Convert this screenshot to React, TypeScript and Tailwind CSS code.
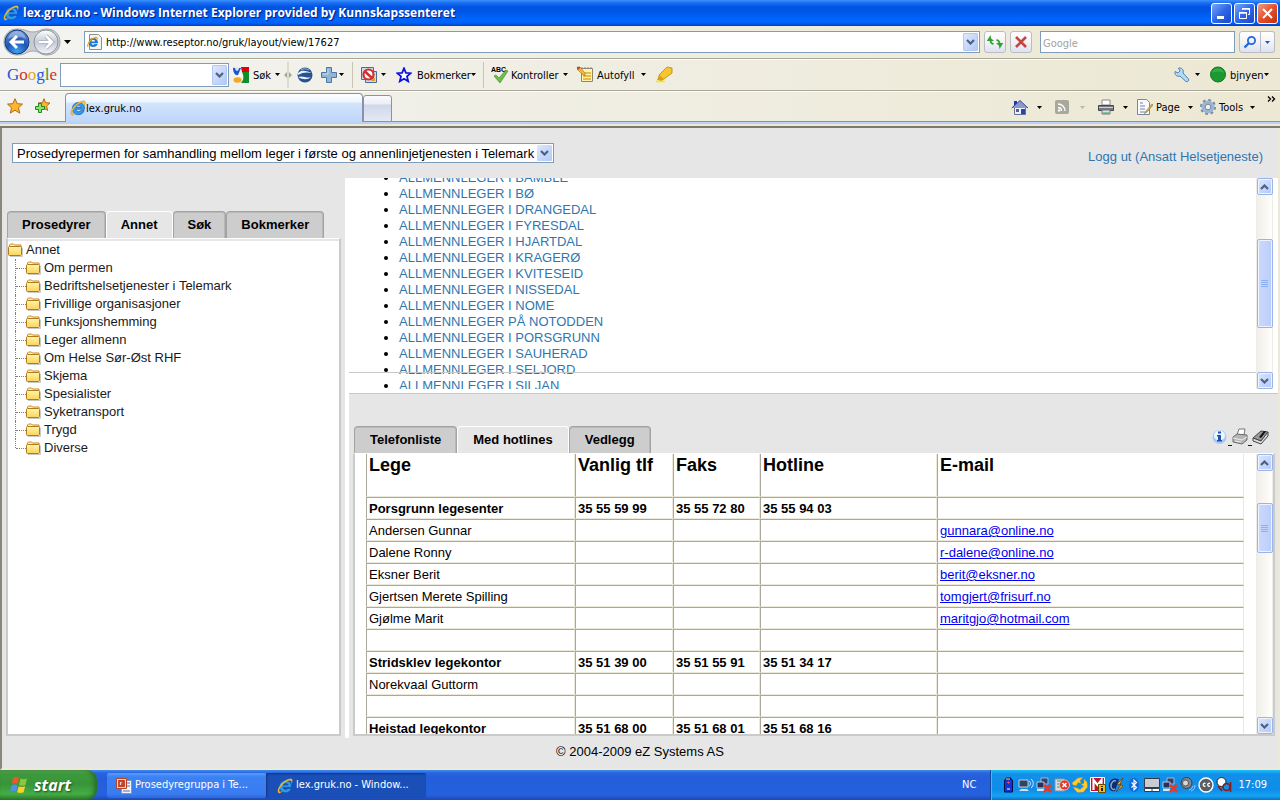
import React from "react";

const ui = "font-['DejaVu_Sans_Condensed','DejaVu_Sans',Tahoma,sans-serif]";

function IeIcon({ size = 16 }: { size?: number }) {
  return (
    <svg width={size} height={size} viewBox="0 0 16 16" className="shrink-0" aria-hidden="true">
      <path d="M14.600 9.300H6c.2 1.500 1.200 2.300 2.600 2.300 1 0 1.800-.4 2.300-1.100h3.300c-.7 2.500-2.900 4.200-5.700 4.200-3.600 0-6.100-2.500-6.100-6.100s2.500-6.200 6.100-6.200c3.700 0 6.300 2.600 6.100 6.900zM6.100 7.100h5c-.2-1.200-1.100-1.900-2.500-1.900S6.300 5.900 6.100 7.100z" fill="#2f9bef" stroke="#0f4f9e" strokeWidth=".6" />
      <path d="M1.600 15C-.7 12.500 2.400 7.200 6.600 3.900 9.900 1.300 13.700 0 15 1.300c.8.9.3 2.700-.6 4.300.2-1.500.1-2.700-.8-3C11.500 2 8.600 3.700 6 6.200 3.100 9 1.600 12.400 2.500 13.500c.5.600 1.800.4 3.200-.5-1.500 1.600-3.300 2.800-4.100 2z" fill="#f9c440" stroke="#b97a10" strokeWidth=".3" />
    </svg>
  );
}

function Caret({ className = "text-black" }: { className?: string }) {
  return (
    <svg width="5" height="3" viewBox="0 0 5 3" className={"shrink-0 " + className} aria-hidden="true">
      <path d="M0 0h5L2.500 3z" fill="currentColor" />
    </svg>
  );
}

function Chevron({ up = false }: { up?: boolean }) {
  return (
    <svg width="9" height="6" viewBox="0 0 9 6" aria-hidden="true">
      <path d={up ? "M1 5l3.500-3.500L8 5" : "M1 1l3.500 3.500L8 1"} fill="none" stroke="#4d6185" strokeWidth="2.200" />
    </svg>
  );
}

function DropButton({ label }: { label: string }) {
  return (
    <button type="button" aria-label={label} className="flex w-[15px] shrink-0 items-center justify-center self-stretch rounded-[1px] border border-[#b4c8f6] bg-linear-to-br from-[#dfe8fd] to-[#b2c9f7]">
      <Chevron />
    </button>
  );
}

function TitleBar() {
  const btn = "flex size-[21px] items-center justify-center rounded-[3px] border border-white";
  return (
    <header className="flex h-[26px] shrink-0 items-center bg-[linear-gradient(#3c92ff_0,#1a6cf0_3px,#0054e3_7px,#0055e5_11px,#0066ff_20px,#0062f8_23px,#003fc0_26px)] pr-0.5 pl-[3px]">
      <IeIcon />
      <h1 className="ml-1 grow font-['Open_Sans','Trebuchet_MS',sans-serif] text-[12px] leading-5 font-bold whitespace-nowrap text-white [text-shadow:1px_1px_1px_#0a1883]">
        lex.gruk.no - Windows Internet Explorer provided by Kunnskapssenteret
      </h1>
      <div className="flex gap-0.5">
        <button type="button" aria-label="Minimize" className={btn + " bg-linear-to-br from-[#7ba4f4] via-[#2f66e8] to-[#1c46c8]"}>
          <svg width="15" height="15" aria-hidden="true"><path d="M3 10h7v3H3z" fill="#fff" /></svg>
        </button>
        <button type="button" aria-label="Restore" className={btn + " bg-linear-to-br from-[#7ba4f4] via-[#2f66e8] to-[#1c46c8]"}>
          <svg width="15" height="15" fill="none" stroke="#fff" aria-hidden="true"><path d="M5.500 4V2.500h7v6H11M2.500 6.500h7v6h-7z" /><path d="M5 3h8M2 7h8" strokeWidth="1.500" /></svg>
        </button>
        <button type="button" aria-label="Close" className={btn + " bg-linear-to-br from-[#f09a82] via-[#e2502a] to-[#c03208]"}>
          <svg width="15" height="15" aria-hidden="true"><path d="M3 3l9 9M12 3l-9 9" stroke="#fff" strokeWidth="2" /></svg>
        </button>
      </div>
    </header>
  );
}

function NavButtons() {
  return (
    <svg width="58" height="28" viewBox="0 0 58 28" className="shrink-0" aria-hidden="true">
      <defs>
        <radialGradient id="back" cx=".5" cy=".9" r=".9"><stop offset="0" stopColor="#3da0f0" /><stop offset=".5" stopColor="#1c56b4" /><stop offset="1" stopColor="#6d94d2" /></radialGradient>
        <linearGradient id="fwd" x2="0" y2="1"><stop offset="0" stopColor="#fff" /><stop offset=".5" stopColor="#c3cbd6" /><stop offset="1" stopColor="#f2f5f9" /></linearGradient>
      </defs>
      <path d="M14 1C23 1 24 4 30 4s7-3 14-3c8 0 13 6 13 13s-5 13-13 13c-7 0-8-4-14-4s-7 4-16 4C6 27 1 21 1 14S6 1 14 1z" fill="#c9ccd1" stroke="#a3a6ac" />
      <circle cx="14" cy="14" r="12" fill="url(#back)" stroke="#173c7c" />
      <path d="M5 11c1-5 5-8 9-8s8 3 9 8c-5-3-13-3-18 0z" fill="#fff" opacity=".35" />
      <path d="M14 8l-6 6 6 6M8.500 14H21" fill="none" stroke="#fff" strokeWidth="3" />
      <circle cx="43" cy="14" r="12" fill="url(#fwd)" stroke="#8d939d" />
      <path d="M43 8l6 6-6 6M48.500 14H36" fill="none" stroke="#9aa1ac" strokeWidth="4" />
      <path d="M43 8l6 6-6 6M48.500 14H36" fill="none" stroke="#fff" strokeWidth="2.600" />
    </svg>
  );
}

function AddressBar() {
  const btn = "flex h-[22px] items-center justify-center border border-[#b9bcc8] bg-linear-to-b from-white via-[#f3f3f5] to-[#dde2f0]";
  return (
    <div className="flex h-8 shrink-0 items-center bg-linear-to-r from-[#f3f3f1] to-[#ece8d3] pr-[5px] pl-[3px]">
      <NavButtons />
      <svg width="7" height="4" className="mr-[13px] ml-[3px] shrink-0" aria-hidden="true"><path d="M0 0h7L3.500 4z" /></svg>
      <div className="flex h-[22px] min-w-0 grow items-center border border-[#7f9db9] bg-white p-px">
        <svg width="15" height="16" viewBox="0 0 15 16" className="ml-px shrink-0" aria-hidden="true">
          <path d="M2.500.5h9l3 3v12h-12z" fill="#f4f4ee" stroke="#8f8f88" />
          <path d="M11 9.200H4.400c.2 1.100.9 1.500 1.800 1.500.7 0 1.200-.3 1.500-.7h2.900c-.5 1.800-2.200 3-4.400 3-2.700 0-4.500-1.800-4.500-4.500S3.500 4 6.200 4c2.900 0 4.800 2 4.800 5.200zM4.400 7.500h3.700c-.1-1-.8-1.400-1.900-1.400s-1.600.4-1.800 1.400z" fill="#1d77d2" />
          <path d="M1 13C-.3 11 3 5 8 3.500c2-.5 2.600.8 2 2" fill="none" stroke="#f0a51c" strokeWidth="1.200" />
        </svg>
        <input aria-label="Address" defaultValue="http://www.reseptor.no/gruk/layout/view/17627" className="ml-1 min-w-0 grow pt-0.5 text-[11px] leading-4 outline-none" />
        <DropButton label="Show addresses" />
      </div>
      <button type="button" aria-label="Refresh" className={btn + " ml-1 w-[22px] rounded-[3px]"}>
        <svg width="18" height="16" aria-hidden="true"><path d="M1 6l4-5v3h3M5 4M17 10l-4 5v-3h-3" fill="none" /><path d="M1 6.500L4.500 1v0L5 4.200 8 7H1zM17 9.500L13.500 15l-.5-3.200L10 9h7z" fill="#32a032" /><path d="M4.500 5.500c0 3 .5 4 3 4.500M13.500 10.500c0-3-.5-4-3-4.500" fill="none" stroke="#32a032" strokeWidth="2" /></svg>
      </button>
      <button type="button" aria-label="Stop" className={btn + " ml-1 w-[22px] rounded-[3px]"}>
        <svg width="14" height="14" aria-hidden="true"><path d="M2 2l10 10M12 2L2 12" stroke="#c5443f" strokeWidth="2.600" /></svg>
      </button>
      <input aria-label="Search" placeholder="Google" className="ml-2 h-[22px] w-[195px] border border-[#7f9db9] bg-white px-0.5 pt-0.5 text-[11px] outline-none placeholder:text-[#a3a3a0]" />
      <button type="button" aria-label="Search the web" className={btn + " ml-1 w-[22px] rounded-l-[3px]"}>
        <svg width="14" height="14" aria-hidden="true"><circle cx="8.500" cy="5.500" r="3.600" fill="#eaf4ff" stroke="#2467df" strokeWidth="1.800" /><path d="M6 8l-4.500 4.500" stroke="#2467df" strokeWidth="2.400" /></svg>
      </button>
      <button type="button" aria-label="Search options" className={btn + " w-3.5 rounded-r-[3px] border-l-0"}>
        <Caret className="text-[#1658d8]" />
      </button>
    </div>
  );
}

function GoogleBar() {
  const sep = "h-[26px] w-px shrink-0 bg-[#c9c5b2]";
  const item = "flex shrink-0 items-center whitespace-nowrap";
  return (
    <div className="flex h-8 shrink-0 items-center border-t border-[#aca899] bg-linear-to-r from-[#f3f3f1] to-[#ece8d3] pr-[11px] pl-[7px] text-[11px] leading-4 shadow-[inset_0_1px_#fff]">
      <span className="w-[53px] shrink-0 font-['Liberation_Serif',serif] text-[17px] leading-5 whitespace-nowrap">
        <b className="font-normal text-[#1f56d8]">G</b><b className="font-normal text-[#d4302a]">o</b><b className="font-normal text-[#e2a81c]">o</b><b className="font-normal text-[#1f56d8]">g</b><b className="font-normal text-[#2a9c38]">l</b><b className="font-normal text-[#d4302a]">e</b>
      </span>
      <div className="flex h-6 w-[169px] shrink-0 border border-[#7f9db9] bg-white p-px">
        <input aria-label="Google search" className="min-w-0 grow outline-none" />
        <DropButton label="Search history" />
      </div>
      <button type="button" className={item + " ml-1 w-[50px]"}>
        <svg width="16" height="16" className="mr-1 shrink-0" aria-hidden="true">
          <path d="M8 0h8v5H9z" fill="#e0000c" /><path d="M9 5h7v11H8c3-3 3-7 1-11z" fill="#0f8f2c" />
          <path d="M0 1c2-1 3 1 4 3l2-3h2L5 8C2 9 0 5 0 1z" fill="#1f55c8" /><circle cx="4" cy="2" r="1.800" fill="#cfe0fa" /><path d="M4.500 9L8 6.500 9.500 9z" fill="#fff" /><ellipse cx="4.500" cy="13" rx="4" ry="2.800" fill="#f3a927" />
        </svg>
        <span className="w-[22px] pt-0.5 text-left">Søk</span><Caret />
      </button>
      <svg width="8" height="26" className="ml-px shrink-0" aria-hidden="true"><path d="M0 13l3-3v6zM8 13l-3-3v6z" fill="#aaa793" /><path d="M4 0v26" stroke="#c9c5b2" /></svg>
      <svg width="16" height="16" className="ml-[5px] shrink-0" aria-hidden="true"><circle cx="8" cy="8" r="7.500" fill="#27518f" /><path d="M1 6c4-4 9-2 14 0-5-1-9-1-14 2zM1 10c5-2 9 2 13 0-3 3-8 3-13 0z" fill="#e8f1fa" /><path d="M4 3c3-2 6-1 8 0" stroke="#9fc0e6" fill="none" /></svg>
      <svg width="16" height="16" className="ml-2 shrink-0" aria-hidden="true"><path d="M5.500.5h5v5h5v5h-5v5h-5v-5h-5v-5h5z" fill="#8fb6d8" stroke="#50789f" /><path d="M7 2v5H2" stroke="#c4dcf0" fill="none" /></svg>
      <span className="w-0.5" /><Caret /><span className="w-2" />
      <span className={sep} />
      <svg width="16" height="16" className="ml-2 shrink-0" aria-hidden="true"><path d="M.5.5h12v12H.5zM11 4.500h4.500v11h-11V13" fill="#c7dcf2" stroke="#4a6d99" /><path d="M10 11h4v3h-4z" fill="#e0a02c" /><circle cx="7.500" cy="7.500" r="5" fill="#fff" stroke="#d42e2a" strokeWidth="2.200" /><path d="M4 4.500l7 6.500" stroke="#d42e2a" strokeWidth="2.400" /></svg>
      <span className="w-1" /><Caret />
      <button type="button" className={item + " ml-2.5"}>
        <svg width="16" height="16" className="mr-[5px] shrink-0" aria-hidden="true"><path d="M8 1.300l1.900 4.500 4.800.4-3.700 3.200 1.200 4.900L8 11.700l-4.200 2.600 1.200-4.900L1.300 6.200l4.800-.4z" fill="#fff" stroke="#0a12e0" strokeWidth="1.800" /></svg>
        <span className="w-[54px] pt-0.5 text-left">Bokmerker</span><Caret />
      </button>
      <span className={sep + " ml-[7px]"} />
      <button type="button" className={item + " ml-2"}>
        <svg width="16" height="17" className="mr-[3px] shrink-0 overflow-visible" aria-hidden="true"><text x="-1" y="6" fontSize="7" fontFamily="Liberation Sans" fontWeight="bold">ABC</text><path d="M2 10l2-1 3 3 7-8 2 1-8 12z" fill="#6cc04a" stroke="#3b7d2a" strokeWidth=".6" /></svg>
        <span className="w-[52px] pt-0.5 text-left">Kontroller</span><Caret />
      </button>
      <button type="button" className={item + " ml-[9px]"}>
        <svg width="17" height="17" className="mr-[3px] shrink-0" aria-hidden="true"><path d="M4.500 2.500h11v13h-11z" fill="#fff5b0" stroke="#8c8870" /><path d="M5 1v2M8 1v2M11 1v2M14 1v2" stroke="#888" /><path d="M8 7h6M6 10h8M6 13h8" stroke="#e0a820" strokeWidth="1.500" /><path d="M0 1h3l5 6v3L5 8 0 3z" fill="#f5b33a" stroke="#9b6a1c" strokeWidth=".6" /><path d="M0 1h3v1L1 4 0 3z" fill="#d23a2c" /></svg>
        <span className="w-[44px] pt-0.5 text-left">Autofyll</span><Caret />
      </button>
      <svg width="17" height="17" className="ml-2.5 shrink-0" aria-hidden="true"><path d="M3 9l8-8 5 1v5l-8 6-4 1z" fill="#f6c62c" stroke="#b8860b" strokeWidth=".8" /><path d="M3 9l5 4-2 2-5-1z" fill="#d9a216" /><path d="M0 15.500h9" stroke="#ffe600" strokeWidth="1.500" /></svg>
      <span className="grow" />
      <svg width="16" height="16" className="shrink-0" aria-hidden="true"><path d="M1 4.500L4 6l2-2-1.500-3C8 .5 10 3 9 6l5.500 6c1 1.500-1 3.500-2.500 2.500L6 9C3 10 .5 8 1 4.500z" fill="#b9daf3" stroke="#4e84b4" /></svg>
      <span className="w-[5px]" /><Caret />
      <button type="button" className={item + " ml-2.5"}>
        <svg width="17" height="17" className="mr-[3px] shrink-0" aria-hidden="true"><circle cx="8" cy="8.500" r="7.500" fill="#1b9a2f" stroke="#0f7522" /><path d="M2 7c1-6 11-6 12 0-3-2-9-2-12 0z" fill="#4dbb57" opacity=".6" /></svg>
        <span className="w-[34px] pt-0.5 text-left">bjnyen</span><Caret />
      </button>
    </div>
  );
}

function TabBar() {
  const item = "flex items-center whitespace-nowrap";
  return (
    <div className="flex h-8 shrink-0 items-end border-t border-[#aca899] bg-linear-to-r from-[#f3f3f1] to-[#ece8d3] pr-1 pl-[7px] text-[11px] leading-4 shadow-[inset_0_1px_#fff,inset_0_-1px_#8d90a8]">
      <svg width="16" height="16" className="mb-2 shrink-0" aria-hidden="true"><path d="M8 .7l2.200 5 5.300.4-4 3.600 1.200 5.400L8 12.200l-4.700 2.900 1.200-5.400-4-3.600 5.300-.4z" fill="#ffb62c" stroke="#b06a12" /></svg>
      <svg width="17" height="16" className="mr-3.5 mb-2 ml-[11px] shrink-0" aria-hidden="true"><path d="M10 .7l1.600 4 4.400.3-3.400 3 1 4.500L10 10l-4 2.500 1-4.500-3-3 4.500-.3z" fill="#ffb62c" stroke="#b06a12" /><path d="M4.500 5.500h3v3h3v3h-3v3h-3v-3h-3v-3h3z" fill="#8fe070" stroke="#1f8a1f" /></svg>
      <div className="flex h-[29px] w-[298px] items-center rounded-t-[4px] border border-b-0 border-[#8d90a8] bg-[linear-gradient(#fdfeff_0,#eef5fe_8px,#d3e5fc_9px,#bdd5fa_29px)] pl-1">
        <IeIcon />
        <span className="pt-0.5">lex.gruk.no</span>
      </div>
      <button type="button" aria-label="New tab" className="h-[27px] w-[29px] rounded-t-[3px] border border-[#8d90a8] bg-[linear-gradient(#fbfbfd_0,#eceef5_8px,#cfd7ea_9px,#e6eaf5_26px)]" />
      <span className="grow" />
      <div className="mb-1.5 flex items-center">
        <svg width="18" height="17" aria-hidden="true"><path d="M3 2h3v5H3z" fill="#2338a8" /><path d="M3.500 8.500h11v7h-11z" fill="#eef1fa" stroke="#66719c" /><path d="M.7 9L9 1.500 17 9" fill="#8b98cf" stroke="#3c4a86" /><path d="M10 10h4v5h-4z" fill="#1f4aa8" /><path d="M5 10h3v3H5z" fill="#58617c" /></svg>
        <span className="w-2" /><Caret /><span className="w-[13px]" />
        <svg width="15" height="15" aria-hidden="true"><rect width="14" height="14" rx="2" fill="#aaa79b" /><path d="M3 4c4 0 7 3 7 7M3 7.500c2 0 3.500 1.500 3.500 3.500" stroke="#fff" strokeWidth="1.400" fill="none" /><circle cx="4" cy="10.500" r="1.200" fill="#fff" /></svg>
        <span className="w-[10px]" /><Caret className="text-[#bcb9ac]" /><span className="w-[13px]" />
        <svg width="16" height="16" aria-hidden="true"><path d="M4 1h8v5H4z" fill="#fff" stroke="#888" /><path d="M.5 6.500h15v5H.5z" fill="#77797d" stroke="#45484c" /><path d="M1 8.500h14" stroke="#cfd2d6" /><path d="M4 11h8v4H4z" fill="#cfe6f2" stroke="#777" /><path d="M5 14h6" stroke="#3f9c58" /></svg>
        <span className="w-[9px]" /><Caret /><span className="w-[9px]" />
        <button type="button" className={item}>
          <svg width="16" height="16" className="mr-[3px]" aria-hidden="true"><path d="M.5.500h9l3 3v12H.5z" fill="#f8fafc" stroke="#7d8794" /><path d="M3 4h3M3 7h5M3 10h5M3 13h5" stroke="#6a87ae" /><path d="M15 5l-6 7-1.500 2.500L10 13l6-7z" fill="#e9b44a" stroke="#8a6a24" strokeWidth=".6" /></svg>
          <span className="w-8 pt-0.5 text-left">Page</span><Caret />
        </button>
        <button type="button" className={item + " ml-[6px]"}>
          <svg width="18" height="18" className="mr-0.5" aria-hidden="true"><circle cx="9" cy="9" r="7" fill="none" stroke="#6d87a6" strokeWidth="2" strokeDasharray="2.750 2.750" /><circle cx="9" cy="9" r="4.800" fill="none" stroke="#9bb4d0" strokeWidth="3.400" /><circle cx="9" cy="9" r="2.800" fill="#f3f2ea" stroke="#6d87a6" /></svg>
          <span className="w-[31px] pt-0.5 text-left">Tools</span><Caret />
        </button>
      </div>
      <button type="button" aria-label="More" className="mb-5 ml-3">
        <svg width="9" height="6" aria-hidden="true"><path d="M1 .5L3.500 3 1 5.500M5 .5L7.500 3 5 5.500" fill="none" stroke="#000" strokeWidth="1.300" /></svg>
      </button>
    </div>
  );
}

function ScrollButton({ up = false }: { up?: boolean }) {
  return (
    <button type="button" aria-label={up ? "Scroll up" : "Scroll down"} className="flex h-[17px] w-4 shrink-0 items-center justify-center rounded-[2px] border border-[#98b4ea] bg-linear-to-br from-[#dce6fd] to-[#b4c9f8] shadow-[inset_0_0_0_1px_#eef3ff]">
      <Chevron up={up} />
    </button>
  );
}

function ScrollBar({ spacer, thumb }: { spacer: string; thumb: string }) {
  return (
    <div className="flex w-[17px] shrink-0 flex-col items-center border-x border-[#eeede5] bg-linear-to-r from-[#f0efe9] to-[#fefefb]">
      <ScrollButton up />
      <div className={spacer} />
      <div className={"flex w-4 shrink-0 flex-col items-center justify-center gap-px rounded-[2px] border border-[#98b4ea] bg-linear-to-r from-[#cbd9fd] to-[#bacdfa] shadow-[inset_0_0_0_1px_#eef3ff] " + thumb}>
        <i className="h-px w-[7px] bg-[#8cb0f8]" /><i className="h-px w-[7px] bg-[#8cb0f8]" /><i className="h-px w-[7px] bg-[#8cb0f8]" /><i className="h-px w-[7px] bg-[#8cb0f8]" />
      </div>
      <div className="grow" />
      <ScrollButton />
    </div>
  );
}

function Tabs({ names, active, pad }: { names: string[]; active: string; pad: string }) {
  return (
    <div role="tablist" className="flex h-[27px] pl-px text-[13px] font-bold">
      {names.map((n) => (
        <button
          key={n}
          type="button"
          role="tab"
          aria-selected={n === active}
          className={
            "rounded-t-[4px] border border-b-0 whitespace-nowrap " + pad +
            (n === active
              ? " border-white bg-[#e6e6e6]"
              : " border-[#a3a3a3] bg-[#cdcdcd] shadow-[inset_0_1px_#b8b8b8,inset_-1px_0_#b8b8b8]")
          }
        >
          {n}
        </button>
      ))}
    </div>
  );
}

function Folder() {
  return (
    <svg width="16" height="14" viewBox="0 0 16 14" className="shrink-0" aria-hidden="true">
      <defs><linearGradient id="fold" x2="0" y2="1"><stop offset="0" stopColor="#fff6a8" /><stop offset="1" stopColor="#fbd25c" /></linearGradient></defs>
      <path d="M2 13.500h12.500v-9" fill="none" stroke="#c9c9c9" />
      <path d="M1.500 3V2l1-1h3l1 1h6.500v2" fill="#fff3c0" stroke="#c08a28" />
      <rect x=".500" y="3.500" width="13" height="9" rx="1" fill="url(#fold)" stroke="#b5791a" />
    </svg>
  );
}

const folders = ["Om permen", "Bedriftshelsetjenester i Telemark", "Frivillige organisasjoner", "Funksjonshemming", "Leger allmenn", "Om Helse Sør-Øst RHF", "Skjema", "Spesialister", "Syketransport", "Trygd", "Diverse"];

function Sidebar() {
  return (
    <aside className="flex w-[343px] shrink-0 flex-col pr-1 pb-0.5 pl-1">
      <div className="h-[33px] shrink-0" />
      <Tabs names={["Prosedyrer", "Annet", "Søk", "Bokmerker"]} active="Annet" pad="px-3.5" />
      <div className="min-h-0 grow overflow-hidden border-2 border-t border-[#cacaca] border-t-white bg-white text-[13px] leading-[18px] text-[#1a1a1a]">
        <div className="flex h-[20px] items-center gap-0.5 border-t-2 border-[#e6e6e6]">
          <Folder />Annet
        </div>
        <ul>
          {folders.map((f, i) => (
            <li key={f} className="flex h-[18px] items-center pl-[7px]">
              <span className={"w-px self-start border-l border-dotted border-[#808080] " + (i === folders.length - 1 ? "h-[9px]" : "h-[18px]")} />
              <span className="w-2.5 border-t border-dotted border-[#808080]" />
              <Folder />
              <span className="ml-0.5">{f}</span>
            </li>
          ))}
        </ul>
      </div>
    </aside>
  );
}

const places = ["I BAMBLE", "I BØ", "I DRANGEDAL", "I FYRESDAL", "I HJARTDAL", "I KRAGERØ", "I KVITESEID", "I NISSEDAL", "I NOME", "PÅ NOTODDEN", "I PORSGRUNN", "I SAUHERAD", "I SELJORD", "I SILJAN"];

function PlaceList() {
  return (
    <section className="flex h-[216px] shrink-0 border-b border-[#c8c8c8] bg-white pr-[5px] pb-1">
      <div className="relative min-w-0 grow overflow-hidden">
        <ul className="-mt-2 list-disc pl-[50px] text-[13px] leading-4 text-black">
          {places.map((p) => (
            <li key={p}><a href="#" className="text-[#2f76b0]">ALLMENNLEGER {p}</a></li>
          ))}
        </ul>
        <hr className="absolute inset-x-0 bottom-4 border-[#c8c8c8]" />
      </div>
      <ScrollBar spacer="h-11 shrink-0" thumb="h-[89px]" />
    </section>
  );
}

const rows: { name: string; tel?: string; fax?: string; hot?: string; mail?: string }[] = [
  { name: "Porsgrunn legesenter", tel: "35 55 59 99", fax: "35 55 72 80", hot: "35 55 94 03" },
  { name: "Andersen Gunnar", mail: "gunnara@online.no" },
  { name: "Dalene Ronny", mail: "r-dalene@online.no" },
  { name: "Eksner Berit", mail: "berit@eksner.no" },
  { name: "Gjertsen Merete Spilling", mail: "tomgjert@frisurf.no" },
  { name: "Gjølme Marit", mail: "maritgjo@hotmail.com" },
  { name: "" },
  { name: "Stridsklev legekontor", tel: "35 51 39 00", fax: "35 51 55 91", hot: "35 51 34 17" },
  { name: "Norekvaal Guttorm" },
  { name: "" },
  { name: "Heistad legekontor", tel: "35 51 68 00", fax: "35 51 68 01", hot: "35 51 68 16" },
];

function PhoneTable() {
  const edge = "border border-[#aca899] border-r-[#ece9d8] border-b-[#ece9d8] px-0.5 whitespace-nowrap";
  const cell = edge + " pt-0.5";
  return (
    <table className="w-full table-fixed border-separate border-spacing-0 text-[13px] leading-4">
      <colgroup>
        <col className="w-[209px]" /><col className="w-[98px]" /><col className="w-[87px]" /><col className="w-[177px]" /><col />
      </colgroup>
      <thead>
        <tr className="h-[43px] text-left align-top text-[18px] leading-[22px]">
          {["Lege", "Vanlig tlf", "Faks", "Hotline", "E-mail"].map((h) => (
            <th key={h} className={edge + " border-t-0"}>{h}</th>
          ))}
        </tr>
      </thead>
      <tbody>
        {rows.map((r, i) => (
          <tr key={i} className={"h-[22px] " + (r.tel ? "font-bold" : "")}>
            <td className={cell}>{r.name}</td>
            <td className={cell}>{r.tel}</td>
            <td className={cell}>{r.fax}</td>
            <td className={cell}>{r.hot}</td>
            <td className={cell}>{r.mail && <a href={"mailto:" + r.mail} className="text-[#0000ee] underline">{r.mail}</a>}</td>
          </tr>
        ))}
      </tbody>
    </table>
  );
}

function Tools() {
  return (
    <div className="mb-2 flex items-end gap-1">
      <a href="#" aria-label="Information">
        <svg width="16" height="16" aria-hidden="true"><ellipse cx="7.500" cy="8" rx="7" ry="7" fill="#a9c9ee" /><ellipse cx="7.500" cy="6.500" rx="5.500" ry="5" fill="#eef6ff" /><path d="M6 2.500h3v2H6zM5 6h4v5h1v1.500H5V11h1V7.500H5z" fill="#1f55a8" /></svg>
      </a>
      <a href="#" aria-label="Print">
        <svg width="16" height="17" className="overflow-visible" aria-hidden="true"><path d="M7 1h6l-1 6H5z" fill="#fff" stroke="#777" /><path d="M1 9l4-3 10 1v5l-5 4-9-2z" fill="#b5b5b5" stroke="#6c6c6c" /><path d="M1 10l9 2 5-3M3 13l6 1" stroke="#eee" fill="none" /><path d="M-4 17.500H0M16 17.500h4" stroke="#0000ee" /></svg>
      </a>
      <a href="#" aria-label="Bookmark">
        <svg width="17" height="16" aria-hidden="true"><path d="M1 9l8-7 7 1-7 9z" fill="#999" stroke="#444" /><path d="M1 9v3l8 3 7-8V3l-7 9z" fill="#ddd" stroke="#444" /><path d="M7 8l5-6 2 .5L9 9z" fill="#111" /></svg>
      </a>
    </div>
  );
}

function PhonePanel() {
  return (
    <section className="flex min-h-0 grow flex-col pt-8 pr-[3px] pb-0.5 pl-1">
      <div className="flex h-[27px] shrink-0 items-end justify-between pr-1.5">
        <Tabs names={["Telefonliste", "Med hotlines", "Vedlegg"]} active="Med hotlines" pad="px-[15px]" />
        <Tools />
      </div>
      <div className="flex min-h-0 grow border-2 border-t border-[#cacaca] border-t-white bg-white">
        <div className="min-w-0 grow overflow-hidden pr-3 pl-[11px]">
          <PhoneTable />
        </div>
        <ScrollBar spacer="h-8 shrink-0" thumb="h-[50px]" />
      </div>
    </section>
  );
}

function Page() {
  return (
    <main className="flex min-h-0 grow flex-col border-r-2 border-b-2 border-l-2 border-[#ece9d8] border-l-[#8a877a] bg-[#e6e6e6] font-['Liberation_Sans',Arial,sans-serif] text-[13px]">
      <div className="flex h-[50px] shrink-0 items-start justify-between pt-[15px] pr-[15px] pl-2.5">
        <div className="relative">
          <label htmlFor="perm" className="sr-only">Prosedyreperm</label>
          <select id="perm" className="h-5 w-[542px] appearance-none border border-[#7f9db9] bg-white pt-0.5 pl-1 text-[13px] leading-4">
            <option>Prosedyrepermen for samhandling mellom leger i første og annenlinjetjenesten i Telemark</option>
          </select>
          <span className="pointer-events-none absolute top-0.5 right-0.5 flex h-4 w-[15px] items-center justify-center rounded-[1px] bg-linear-to-br from-[#dfe8fd] to-[#b2c9f7]">
            <Chevron />
          </span>
        </div>
        <a href="#" className="mt-1.5 leading-4 text-[#2f76b0]">Logg ut (Ansatt Helsetjeneste)</a>
      </div>
      <div className="flex min-h-0 grow">
        <Sidebar />
        <div className="w-1 shrink-0 bg-white" />
        <div className="flex min-w-0 grow flex-col">
          <PlaceList />
          <PhonePanel />
        </div>
      </div>
      <footer className="flex h-[30px] shrink-0 items-center justify-center pb-0.5">© 2004-2009 eZ Systems AS</footer>
    </main>
  );
}

function TrayIcons() {
  return (
    <div className="flex shrink-0 items-center gap-0.5">
      <svg width="16" height="16" aria-hidden="true"><path d="M6 1h5v2h1.500v12h-8V3H6z" fill="#1434d0" stroke="#050c50" /><path d="M6 2h4" stroke="#e0e040" /><path d="M8.500 4v3M7 5.500h3" stroke="#f33" /><path d="M7 12h3" stroke="#fff" /></svg>
      <svg width="16" height="16" aria-hidden="true"><path d="M1 3h9v7H1z" fill="#33435f" stroke="#c3cfdf" /><path d="M3 12h6l2 2H1z" fill="#d8dfe8" /><path d="M11 4c2 1 2 4 0 5M13 2c3 2 3 7 0 9" fill="none" stroke="#cfe4ff" /></svg>
      <NetworkDown />
      <svg width="16" height="16" aria-hidden="true"><path d="M1 2h9v12H1z" fill="#d9dde0" stroke="#8c959b" /><path d="M3 4h5M3 7h3M3 10h3" stroke="#4a9a5c" /><circle cx="10.500" cy="8" r="5" fill="#e0392c" stroke="#f7b4ac" /><path d="M8.500 6l4 4M12.500 6l-4 4" stroke="#fff" strokeWidth="1.600" /></svg>
      <svg width="16" height="16" aria-hidden="true"><path d="M0 6l6-5 5-.5-3 3 1 3-3-1-1.500 3L1 8zM12 2l3 3 .5 5-4 5-6 .5L3 13l-2-3 4 1 3 1.500L12 9l-3-1 3-2z" fill="#ffcb2e" stroke="#c98e0c" strokeWidth=".4" /></svg>
      <svg width="16" height="16" aria-hidden="true"><path d="M.5.500h14v14H.5z" fill="#c4122e" stroke="#fff" /><path d="M3.500 13V3l4 5 4-5v5" fill="none" stroke="#fff" strokeWidth="2.200" /><path d="M8.500 7.500h7v8h-7z" fill="#f2b81c" stroke="#6b4a00" /><path d="M12 9v1M12 11v3" stroke="#000" strokeWidth="1.600" /></svg>
      <svg width="16" height="16" aria-hidden="true"><path d="M9 2C4 0 0 5 1 10c0 3 3 5 6 4l4-12z" fill="#152c66" /><path d="M8 4C5 3 3 6 3 9s2 4 4 3" fill="none" stroke="#7fa8e8" strokeWidth="1.500" /><path d="M15 1L9 7l4 1-5 7 7-6-3-2z" fill="#ffb020" stroke="#5e3500" strokeWidth=".7" /></svg>
      <svg width="16" height="16" aria-hidden="true"><ellipse cx="8" cy="8" rx="5" ry="7" fill="#1066dc" /><path d="M5.500 5.500l5 5L8 13V3l2.500 2.500-5 5" fill="none" stroke="#fff" strokeWidth="1.100" /></svg>
      <svg width="16" height="16" aria-hidden="true"><path d="M.5 1.500h15v9H.5z" fill="#c8ccd2" stroke="#333b48" /><path d="M.5 11.500h15v3H.5z" fill="#fff" stroke="#333b48" /><path d="M8 11v4" stroke="#333b48" /></svg>
      <NetworkDown />
      <svg width="16" height="16" aria-hidden="true"><circle cx="6.500" cy="6" r="5.500" fill="#82868a" stroke="#3d4043" /><circle cx="5.500" cy="6" r="3" fill="#d6d9dc" stroke="#555" /><path d="M11 14c3-1 4-3 4-6M9 13c2 0 3-2 4-4" fill="none" stroke="#9cc7ff" /></svg>
      <svg width="16" height="16" aria-hidden="true"><circle cx="8" cy="8" r="7" fill="#5b5f64" stroke="#fff" strokeWidth="1.400" /><path d="M7.500 6.500c-3-1.500-3 4 0 2.500M12 6.500c-3-1.500-3 4 0 2.500" fill="none" stroke="#fff" strokeWidth="1.300" /></svg>
      <svg width="16" height="16" aria-hidden="true"><circle cx="5.500" cy="5" r="4.500" fill="#fff" stroke="#222" /><circle cx="10.500" cy="10" r="3.500" fill="none" stroke="#8b1a1a" strokeWidth="1.600" /><path d="M14.500 5v10M2 9l4 5" stroke="#8b1a1a" strokeWidth="1.600" /></svg>
    </div>
  );
}

function NetworkDown() {
  return (
    <svg width="16" height="16" aria-hidden="true"><path d="M5 1h7v6H5z" fill="#34416c" stroke="#aab6cc" /><path d="M1 5h7v6H1z" fill="#26325c" stroke="#c0cadb" /><path d="M1 13h7" stroke="#dfe4ec" strokeWidth="2" /><path d="M8 8l7 7M15 8l-7 7" stroke="#e23a2e" strokeWidth="2.600" /></svg>
  );
}

function Taskbar() {
  return (
    <footer className="flex h-[30px] shrink-0 items-stretch bg-[linear-gradient(#3f8cf3_0,#2a63dd_3px,#245edb_8px,#2561de_25px,#1c47b5_30px)] text-[11px] text-white">
      <button type="button" className="flex w-[97px] shrink-0 items-center rounded-r-[10px] bg-[linear-gradient(#5fae5f_0,#3c9a3c_4px,#389438_14px,#44ad44_24px,#2b7a2b_30px)] pl-2.5 font-['Open_Sans','Trebuchet_MS',sans-serif] text-[16px] leading-5 font-bold italic shadow-[inset_-3px_0_4px_#2a6d2a] [text-shadow:1px_1px_2px_#1d4d1d]">
        <svg width="20" height="18" viewBox="0 0 20 18" className="mr-1 shrink-0" aria-hidden="true">
          <path d="M3 2c2-1.500 4-1.500 6-.2L7.500 8C6 7 4 7 1.800 8z" fill="#f0562a" /><path d="M10.500 2.500c2 1 4 1 6.500 0L15.500 9c-2 1-4.500 1-6.500 0z" fill="#8cc63e" />
          <path d="M1.500 9.500c2-1.200 4-1.200 6-.2L6 15.500c-2-1-4-1-6 .2z" fill="#4f8ff0" /><path d="M8.700 10.300c2 1 4.300 1 6.500 0l-1.600 6c-2 1-4.500 1-6.500 0z" fill="#fccf2c" />
        </svg>
        <span>start</span>
      </button>
      <div className="flex min-w-0 grow items-center pt-px pl-2.5">
        <button type="button" className="flex h-[25px] w-[159px] items-center rounded-[2px] bg-[linear-gradient(#5a9cff,#3c81f3_4px,#3a7cf0_21px,#2c66d8)] pl-[9px] whitespace-nowrap">
          <svg width="16" height="16" className="mr-[3px] shrink-0" aria-hidden="true"><path d="M5.500 2.500h10v13h-10z" fill="#f4f4f8" stroke="#8c93a8" /><path d="M11 5h3M11 8h3M7 13h7" stroke="#5570a8" /><path d="M.5.500h10v10H.5z" fill="#e8d8c8" stroke="#b5452a" /><path d="M3 3h5v5H3z" fill="none" stroke="#c8402a" strokeWidth="1.800" /><circle cx="7" cy="6" r="2" fill="#c8402a" /></svg>
          Prosedyregruppa i Te...
        </button>
        <button type="button" className="flex h-[25px] w-[160px] items-center rounded-[2px] bg-[#1b4fb8] pl-[11px] whitespace-nowrap shadow-[inset_1px_1px_2px_#12357f]">
          <IeIcon /><span className="ml-[3px]">lex.gruk.no - Window...</span>
        </button>
      </div>
      <span className="flex w-7 shrink-0 items-center pt-px">NC</span>
      <div className="flex w-[290px] shrink-0 items-center justify-between border-l border-[#0d4a9e] bg-[linear-gradient(#1cc0f8_0,#1290e9_4px,#0d8dea_20px,#14a5f3_26px,#0c6fc4_30px)] pr-[13px] pl-[9px] shadow-[inset_1px_0_#2cc4f8]">
        <TrayIcons />
        <time className="pt-px">17:09</time>
      </div>
    </footer>
  );
}

export default function App() {
  return (
    <div className={"flex h-screen min-w-[1100px] flex-col overflow-hidden text-black " + ui}>
      <TitleBar />
      <AddressBar />
      <GoogleBar />
      <TabBar />
      <div className="h-1.5 shrink-0 border-b-2 border-[#7d7a6c] bg-linear-to-b from-[#bdd0f6] from-50% to-[#ece9d8] to-50%" />
      <Page />
      <Taskbar />
    </div>
  );
}
